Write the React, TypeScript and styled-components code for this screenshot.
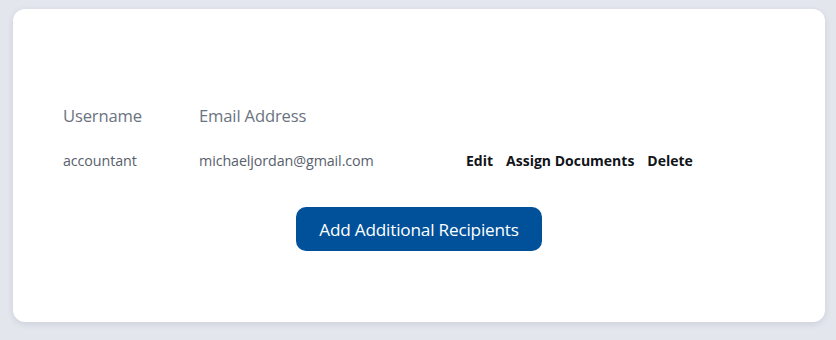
import React from "react";
import styled, { createGlobalStyle } from "styled-components";

const GlobalStyle = createGlobalStyle`
  html, body {
    margin: 0;
    background: #e3e6ed;
    font-family: "Open Sans", "Noto Sans", sans-serif;
  }
  body {
    padding: 9px 11px 18px 13px;
  }
`;

const Card = styled.div`
  background: #ffffff;
  border-radius: 12px;
  box-shadow: 0 2px 6px rgba(40, 50, 80, 0.12);
  height: 313px;
  box-sizing: border-box;
  padding: 84px 50px 0;
  display: flex;
  flex-direction: column;
`;

const Table = styled.div`
  display: grid;
  grid-template-columns: 136px 267px auto;
  align-items: center;
`;

const HeadCell = styled.div`
  font-size: 16.6px;
  color: #6b7380;
  height: 45px;
  display: flex;
  align-items: center;
  letter-spacing: -0.15px;
`;

const Cell = styled.div`
  font-size: 14.3px;
  color: #58606c;
  height: 45px;
  display: flex;
  align-items: center;
  letter-spacing: -0.1px;
`;

const Actions = styled.div`
  display: flex;
  gap: 13px;
  height: 45px;
  align-items: center;
`;

const ActionLink = styled.a`
  font-size: 14px;
  font-weight: 700;
  color: #111418;
  cursor: pointer;
`;

const ButtonRow = styled.div`
  display: flex;
  justify-content: center;
  margin-top: 24px;
`;

const PrimaryButton = styled.button`
  background: #00519a;
  color: #ffffff;
  border: none;
  border-radius: 10px;
  width: 246px;
  height: 44px;
  font-family: inherit;
  font-size: 17.2px;
  letter-spacing: -0.2px;
  cursor: pointer;
`;

export default function App() {
  return (
    <>
      <GlobalStyle />
      <Card>
        <Table>
          <HeadCell>Username</HeadCell>
          <HeadCell>Email Address</HeadCell>
          <HeadCell />
          <Cell>accountant</Cell>
          <Cell>michaeljordan@gmail.com</Cell>
          <Actions>
            <ActionLink>Edit</ActionLink>
            <ActionLink>Assign Documents</ActionLink>
            <ActionLink>Delete</ActionLink>
          </Actions>
        </Table>
        <ButtonRow>
          <PrimaryButton>Add Additional Recipients</PrimaryButton>
        </ButtonRow>
      </Card>
    </>
  );
}
